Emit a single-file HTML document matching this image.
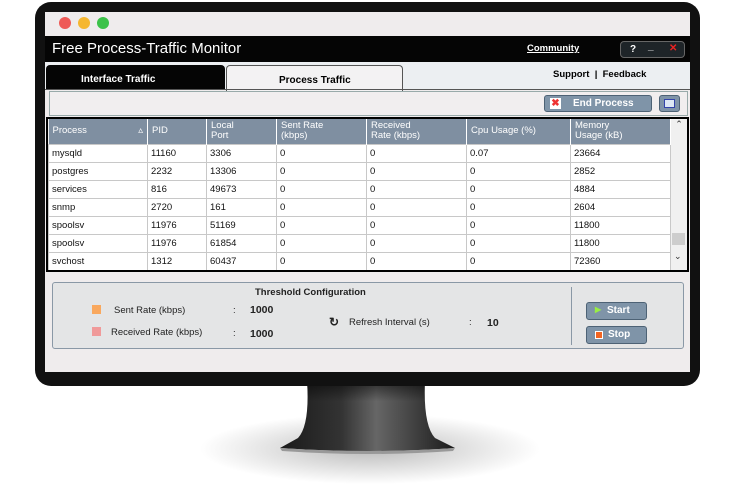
<!DOCTYPE html>
<html><head><style>
*{margin:0;padding:0;box-sizing:border-box}
body{width:736px;height:488px;background:#fff;position:relative;overflow:hidden;font-family:"Liberation Sans",sans-serif}
.abs{position:absolute}
.bezel{left:35px;top:2px;width:665px;height:384px;background:#111;border-radius:16px}
.screen{left:45px;top:12px;width:645px;height:360px;background:#efeced;overflow:hidden}
.dot{width:12px;height:12px;border-radius:50%;top:17px}
.title{left:0;top:24px;width:645px;height:26px;background:#050505;color:#fff}
table{border-collapse:collapse;font-size:9.5px;color:#111}
td{border:1px solid #c8c8c8;height:18px;padding:0 3px;background:#fff}
th{background:#7f8fa1;color:#fff;font-weight:normal;text-align:left;padding:0 4px;height:25px;font-size:9.5px;line-height:10px;border-right:1px solid #fff}
.btn{background:#7f94a8;border:1px solid #4d6275;border-radius:3px;color:#fff;font-weight:bold;font-size:10px}
</style></head><body>
<div class="abs" style="left:200px;top:410px;width:340px;height:78px;background:radial-gradient(ellipse 50% 45% at 50% 50%,#bbb,rgba(255,255,255,0))"></div>
<svg class="abs" style="left:270px;top:380px" width="200" height="90"><defs><linearGradient id="g" x1="0" x2="1"><stop offset="0" stop-color="#1a1a1a"/><stop offset=".35" stop-color="#333"/><stop offset=".55" stop-color="#666"/><stop offset="1" stop-color="#1a1a1a"/></linearGradient><linearGradient id="v" x1="0" x2="0" y1="0" y2="1"><stop offset="0" stop-color="#000" stop-opacity=".6"/><stop offset=".3" stop-color="#000" stop-opacity="0"/></linearGradient></defs>
<path d="M37 0 L155 0 Q153 45 165 58 L185 68 Q100 74 10 68 L28 58 Q40 45 37 0Z" fill="url(#g)"/>
<path d="M37 0 L155 0 Q153 45 165 58 L185 68 Q100 74 10 68 L28 58 Q40 45 37 0Z" fill="url(#v)"/>
<path d="M10 68 Q100 74 185 68 L183 71 Q100 77 12 71Z" fill="#999"/></svg>
<div class="abs bezel"></div>
<div class="abs screen">
 <div class="abs dot" style="left:14px;top:5px;background:#ee5a57"></div>
 <div class="abs dot" style="left:33px;top:5px;background:#f5b731"></div>
 <div class="abs dot" style="left:52px;top:5px;background:#3cc24a"></div>
 <div class="abs title"><span class="abs" style="left:7px;top:4px;font-size:15px">Free Process-Traffic Monitor</span>
  <span class="abs" style="left:482px;top:7px;font-size:9.5px;font-weight:bold;text-decoration:underline">Community</span>
  <div class="abs" style="left:575px;top:5px;width:65px;height:17px;border:1px solid #666;border-radius:4px;background:#1e2428;font-size:10px;font-weight:bold"><span class="abs" style="left:9px;top:2px">?</span><span class="abs" style="left:27px;top:-1px">_</span><span class="abs" style="left:48px;top:1px;color:#e22">✕</span></div></div>
 <div class="abs" style="left:0;top:50px;width:645px;height:27px;background:#eceff2"></div>
 <div class="abs" style="left:1px;top:53px;width:179px;height:25px;background:#050505;border-radius:4px 4px 0 0;color:#fff;font-weight:bold;font-size:10px;padding:9px 0 0 35px">Interface Traffic</div>
 <div class="abs" style="left:181px;top:53px;width:177px;height:26px;background:#f3f2f3;border:1px solid #555;border-bottom:none;border-radius:4px 4px 0 0;font-size:10px;font-weight:bold;padding:9px 0 0 52px">Process Traffic</div>
 <div class="abs" style="left:508px;top:57px;font-size:9.5px;font-weight:bold">Support &nbsp;| &nbsp;Feedback</div>
 <div class="abs" style="left:0;top:77px;width:645px;height:1px;background:#555"></div>
 <div class="abs" style="left:4px;top:79px;width:639px;height:25px;border:1px solid #9aa;background:#f1eeef"></div>
 <div class="abs btn" style="left:499px;top:83px;width:108px;height:17px;padding:2px 0 0 28px">End Process<span class="abs" style="left:5px;top:2px;width:11px;height:11px;background:#fff;color:#e33;font-size:10px;line-height:11px;text-align:center">✖</span></div>
 <div class="abs btn" style="left:614px;top:83px;width:21px;height:17px"><div style="margin:3px 4px;width:11px;height:9px;background:#dde8f5;border:1px solid #34a"></div></div>
 <div class="abs" style="left:1px;top:105px;width:643px;height:155px;border:2px solid #000;background:#f0f0f0;overflow:hidden">
 <table style="width:623px;table-layout:fixed">
 <tr><th style="width:99px">Process <span style="float:right">▵</span></th><th style="width:59px">PID</th><th style="width:70px">Local<br>Port</th><th style="width:90px">Sent Rate<br>(kbps)</th><th style="width:100px">Received<br>Rate (kbps)</th><th style="width:104px">Cpu Usage (%)</th><th>Memory<br>Usage (kB)</th></tr>
 <tr><td>mysqld</td><td>11160</td><td>3306</td><td>0</td><td>0</td><td>0.07</td><td>23664</td></tr>
 <tr><td>postgres</td><td>2232</td><td>13306</td><td>0</td><td>0</td><td>0</td><td>2852</td></tr>
 <tr><td>services</td><td>816</td><td>49673</td><td>0</td><td>0</td><td>0</td><td>4884</td></tr>
 <tr><td>snmp</td><td>2720</td><td>161</td><td>0</td><td>0</td><td>0</td><td>2604</td></tr>
 <tr><td>spoolsv</td><td>11976</td><td>51169</td><td>0</td><td>0</td><td>0</td><td>11800</td></tr>
 <tr><td>spoolsv</td><td>11976</td><td>61854</td><td>0</td><td>0</td><td>0</td><td>11800</td></tr>
 <tr><td>svchost</td><td>1312</td><td>60437</td><td>0</td><td>0</td><td>0</td><td>72360</td></tr>
 <tr><td>svchost</td><td>448</td><td>63112</td><td>0</td><td>0</td><td>0.27</td><td>33032</td></tr>
 </table>
 <div class="abs" style="right:0;top:0;width:16px;height:151px;background:#f0f0f0;font-size:9px;text-align:center;color:#333">⌃<div class="abs" style="left:1px;top:114px;width:13px;height:12px;background:#cdcdcd"></div><div class="abs" style="left:3px;top:132px">⌄</div></div>
 </div>
 <div class="abs" style="left:7px;top:270px;width:632px;height:67px;border:1px solid #8a98a6;border-radius:3px;background:#e4e5e6;font-size:9.5px;color:#222">
  <div class="abs" style="left:202px;top:4px;font-weight:bold">Threshold Configuration</div>
  <div class="abs" style="left:39px;top:22px;width:9px;height:9px;background:#f9a85e"></div><div class="abs" style="left:61px;top:22px">Sent Rate (kbps)</div><div class="abs" style="left:180px;top:22px">:</div><div class="abs" style="left:197px;top:21px;font-weight:bold;font-size:10.5px">1000</div>
  <div class="abs" style="left:39px;top:44px;width:9px;height:9px;background:#f09a9a"></div><div class="abs" style="left:58px;top:44px">Received Rate (kbps)</div><div class="abs" style="left:180px;top:45px">:</div><div class="abs" style="left:197px;top:45px;font-weight:bold;font-size:10.5px">1000</div>
  <div class="abs" style="left:276px;top:32px;font-weight:bold;font-size:12px">↻</div><div class="abs" style="left:296px;top:34px">Refresh Interval (s)</div><div class="abs" style="left:416px;top:34px">:</div><div class="abs" style="left:434px;top:34px;font-weight:bold;font-size:10.5px">10</div>
  <div class="abs" style="left:518px;top:4px;width:1px;height:58px;background:#8a98a6"></div>
  <div class="abs btn" style="left:533px;top:19px;width:61px;height:18px;padding:2px 0 0 20px"><span class="abs" style="left:8px;top:2px;color:#9e4;font-size:8px">▶</span>Start</div>
  <div class="abs btn" style="left:533px;top:43px;width:61px;height:18px;padding:2px 0 0 21px"><span class="abs" style="left:8px;top:4px;width:8px;height:8px;background:#f26522;border:1px solid #fff"></span>Stop</div>
 </div>
</div>
</body></html>
